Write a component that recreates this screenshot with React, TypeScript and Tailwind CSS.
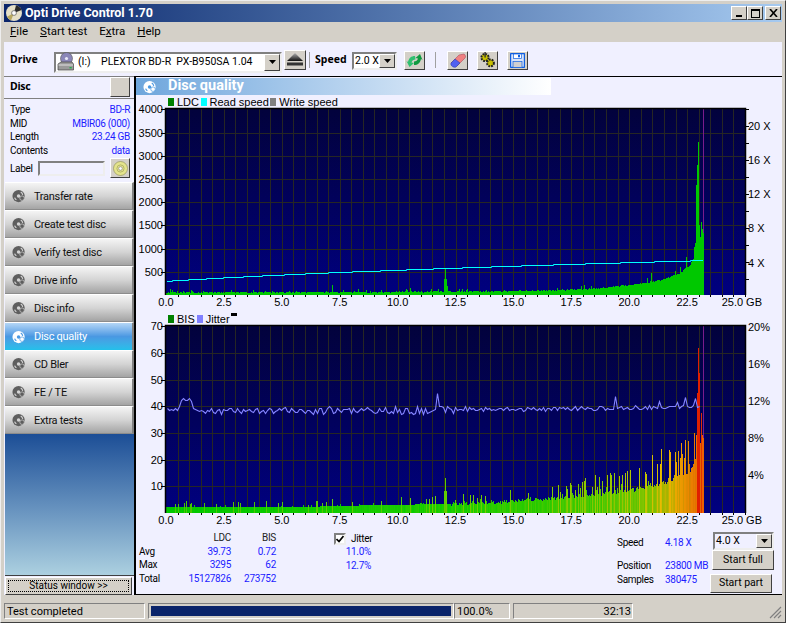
import React from 'react';

// small seeded generator, the curves have to come out the same on every load
const makeRand = (seed: number) => () => {
  seed = (seed * 1664525 + 1013904223) >>> 0;
  return seed / 4294967296;
};

const lerpPoints = (pts: number[][], x: number) => {
  for (let i = 1; i < pts.length; i++) {
    if (x <= pts[i][0]) {
      const [x0, y0] = pts[i - 1];
      const [x1, y1] = pts[i];
      return y0 + ((y1 - y0) * (x - x0)) / (x1 - x0);
    }
  }
  return pts[pts.length - 1][1];
};

const PLOT_LEFT = 166;
const PLOT_RIGHT = 745;
const DATA_END = 703;

const ldcBars = () => {
  const rand = makeRand(11);
  const env = [[166, 2], [400, 2.2], [500, 3], [560, 4], [600, 6], [628, 9], [660, 14], [680, 21], [690, 30], [696, 42], [703, 58]];
  const spikes: Record<number, number> = {
    170: 6, 172: 5, 231: 5, 296: 4, 332: 10, 358: 6, 381: 5, 406: 6, 410: 7, 431: 6, 438: 6, 444: 16, 445: 27, 446: 16, 447: 9, 459: 6, 462: 6, 486: 5, 651: 22,
    686: 38, 680: 28, 675: 24, 694: 48, 695: 52, 696: 110, 697: 130, 698: 153, 699: 70, 700: 58, 701: 73, 702: 66, 703: 62,
  };
  const bars: { x: number; h: number }[] = [];
  for (let x = PLOT_LEFT; x <= DATA_END; x++) {
    let h = lerpPoints(env, x) + rand() * 1.4;
    if (rand() < 0.07) h += rand() * (x > 500 ? 5 : 3);
    if (spikes[x]) h = spikes[x];
    bars.push({ x, h: Math.round(h) });
  }
  return bars;
};

const bisColor = (x: number, bump: number, rand: () => number) => {
  const stops = [[166, 0, 200, 0], [450, 30, 205, 0], [600, 70, 200, 0], [650, 120, 195, 0], [672, 200, 175, 0], [692, 225, 125, 0], [703, 225, 95, 0]];
  let c = stops[stops.length - 1];
  for (let i = 1; i < stops.length; i++) {
    if (x <= stops[i][0]) {
      const a = stops[i - 1];
      const b = stops[i];
      const t = (x - a[0]) / (b[0] - a[0]);
      c = [x, a[1] + (b[1] - a[1]) * t, a[2] + (b[2] - a[2]) * t, 0];
      break;
    }
  }
  const shift = (rand() - 0.5) * (x > 400 ? 36 : 14) + bump;
  return `rgb(${Math.min(235, Math.max(0, Math.round(c[1] + shift)))},${Math.round(c[2])},0)`;
};

const bisBars = () => {
  const rand = makeRand(29);
  const env = [[166, 6], [300, 6], [380, 8], [450, 9], [500, 11], [560, 15], [600, 19], [640, 24], [670, 32], [690, 42], [703, 75]];
  const spikes: Record<number, number> = {
    445: 35, 446: 22, 444: 22, 332: 14, 266: 12, 238: 11, 186: 12, 184: 10, 585: 35, 595: 38, 607: 38, 611: 38, 652: 58, 661: 64, 681: 70, 678: 62, 688: 72, 696: 78, 697: 120, 698: 165, 699: 140, 700: 70, 701: 100, 702: 78, 703: 75,
  };
  const bars: { x: number; h: number; fill: string }[] = [];
  for (let x = PLOT_LEFT; x <= DATA_END; x++) {
    const e = lerpPoints(env, x);
    let h = e + (x > 450 ? rand() * 4 - 2 : 0);
    const chance = x > 560 ? 0.32 : x > 400 ? 0.2 : 0.1;
    if (rand() < chance) h += 1 + rand() * e * (x > 560 ? 1 : x > 400 ? 0.9 : 0.8);
    if (spikes[x]) h = spikes[x];
    const bump = h > e * 1.35 ? 70 : 0;
    const fill = x >= 697 && x <= 699 ? '#e02000' : x === 701 ? '#e03000' : bisColor(x, bump, rand);
    bars.push({ x, h: Math.round(h), fill });
  }
  return bars;
};

const jitterPoints = () => {
  const rand = makeRand(7);
  const base = [[166, 409], [178, 409], [182, 399], [190, 398], [193, 408], [200, 411], [300, 410], [400, 410], [600, 408], [703, 406]];
  const spikes: Record<number, number> = { 438: 393, 615: 396, 660: 401, 678: 402, 686: 397, 696: 398 };
  const pts: string[] = [];
  for (let x = PLOT_LEFT + 1; x <= DATA_END - 3; x += 2) {
    const amp = x < 200 ? 1.4 : x < 300 ? 3 : x < 470 ? 4 : 2;
    let y = lerpPoints(base, x) + (rand() - 0.5) * amp * 2;
    if (spikes[x] || spikes[x + 1]) y = spikes[x] || spikes[x + 1];
    pts.push(`${x + 0.5},${Math.round(y) + 0.5}`);
  }
  return pts.join(' ');
};

const speedSteps = [172, 188, 206, 223, 243, 262, 284, 305, 328, 352, 380, 406, 433, 462, 491, 521, 553, 585, 620, 654, 690];

const speedLine = () => {
  const pts = ['167,281.5'];
  speedSteps.forEach((x, i) => {
    pts.push(`${x + 0.5},${281.5 - i}`, `${x + 0.5},${280.5 - i}`);
  });
  pts.push(`${DATA_END},260.5`);
  return pts.join(' ');
};

const ldc = ldcBars();
const bis = bisBars();
const jitter = jitterPoints();
const speed = speedLine();

const gridXs = Array.from({ length: 50 }, (_, i) => Math.round(PLOT_LEFT + ((i + 1) * (PLOT_RIGHT - PLOT_LEFT)) / 50) + 0.5);
const xLabels = ['0.0', '2.5', '5.0', '7.5', '10.0', '12.5', '15.0', '17.5', '20.0', '22.5'];

const XAxis: React.FC<{ y: number }> = ({ y }) => (
  <g>
    {gridXs.map((x) => (
      <line key={x} x1={x} x2={x} y1={y} y2={y + 2} stroke="#000" />
    ))}
    {xLabels.map((t, i) => (
      <text key={t} x={PLOT_LEFT + (i * (PLOT_RIGHT - PLOT_LEFT)) / 10} y={y + 11} textAnchor="middle">
        {t}
      </text>
    ))}
    <text x={762} y={y + 11} textAnchor="end">
      25.0 GB
    </text>
  </g>
);

const PlotFrame: React.FC<{ top: number; bottom: number; gridYs: number[]; id: string }> = ({ top, bottom, gridYs, id }) => (
  <g>
    <defs>
      <linearGradient id={id} x1="0" y1="0" x2="0" y2="1">
        <stop offset="0" stopColor="#02023c" />
        <stop offset="0.5" stopColor="#01015c" />
        <stop offset="1" stopColor="#000080" />
      </linearGradient>
    </defs>
    <rect x={PLOT_LEFT} y={top} width={PLOT_RIGHT - PLOT_LEFT} height={bottom - top} fill={`url(#${id})`} />
    {gridXs.slice(0, -1).map((x) => (
      <line key={x} x1={x} x2={x} y1={top} y2={bottom} stroke="#262624" />
    ))}
    {gridYs.map((y) => (
      <line key={y} x1={PLOT_LEFT} x2={PLOT_RIGHT} y1={y} y2={y} stroke="#262624" />
    ))}
    <line x1={DATA_END + 0.5} x2={DATA_END + 0.5} y1={top} y2={bottom} stroke="#7a1c8c" />
  </g>
);

const TopChart = () => {
  const left = [4000, 3500, 3000, 2500, 2000, 1500, 1000, 500];
  const rightLabels = ['20 X', '16 X', '12 X', '8 X', '4 X'];
  const ys = left.map((v) => Math.round(295 - v * 0.0464) + 0.5);
  return (
    <svg viewBox="136 108 646 205" className="w-[646px] h-[205px] block overflow-visible text-[11px] font-['Liberation_Sans',Arial,sans-serif] shrink-0">
      <PlotFrame id="plotTop" top={109} bottom={295} gridYs={ys.slice(1)} />
      {ldc.map((b) => (
        <rect key={b.x} x={b.x} y={295 - b.h} width={1} height={b.h} fill="#00c800" />
      ))}
      <polyline points={speed} fill="none" stroke="#00ffff" strokeWidth={1} />
      <polyline points="165.5,295 165.5,108.5 745.5,108.5 745.5,295" fill="none" stroke="#000" strokeWidth={1.5} />
      {left.map((v, i) => (
        <g key={v}>
          <line x1={161} x2={166} y1={ys[i]} y2={ys[i]} stroke="#000" />
          <text x={163} y={ys[i] + 3.5} textAnchor="end">
            {v}
          </text>
        </g>
      ))}
      {Array.from({ length: 11 }, (_, i) => 279.5 - i * 17).map((y) => (
        <line key={y} x1={745} x2={749} y1={y} y2={y} stroke="#000" />
      ))}
      {rightLabels.map((t, i) => (
        <text key={t} x={748} y={129.5 + i * 34.3}>
          {t}
        </text>
      ))}
      <XAxis y={295} />
    </svg>
  );
};

const BottomChart = () => {
  const left = [70, 60, 50, 40, 30, 20, 10];
  const right = ['20%', '16%', '12%', '8%', '4%'];
  const ys = left.map((v) => Math.round(513 - v * 2.67) + 0.5);
  return (
    <svg viewBox="136 324 646 207" className="w-[646px] h-[207px] block overflow-visible text-[11px] font-['Liberation_Sans',Arial,sans-serif] shrink-0">
      <PlotFrame id="plotBottom" top={326} bottom={513} gridYs={ys.slice(1)} />
      {bis.map((b) => (
        <rect key={b.x} x={b.x} y={513 - b.h} width={1} height={b.h} fill={b.fill} />
      ))}
      <polyline points={jitter} fill="none" stroke="#8484ff" strokeWidth={1.1} />
      <polyline points="165.5,513 165.5,325.5 745.5,325.5 745.5,513" fill="none" stroke="#000" strokeWidth={1.5} />
      {left.map((v, i) => (
        <g key={v}>
          <line x1={161} x2={166} y1={ys[i]} y2={ys[i]} stroke="#000" />
          <text x={163} y={ys[i] + 3.5} textAnchor="end">
            {v}
          </text>
        </g>
      ))}
      {right.map((t, i) => (
        <text key={t} x={748} y={330.5 + i * 37}>
          {t}
        </text>
      ))}
      <XAxis y={513} />
    </svg>
  );
};

/* icons */
const AppIcon = () => (
  <svg width="18" height="18" viewBox="0 0 18 18">
    <circle cx="9" cy="9" r="8" fill="#e6e0c8" />
    <path d="M9 9 L11 1.3 A8 8 0 0 1 16.6 6 Z" fill="#2a2a2a" />
    <path d="M9 9 L2 12.8 A8 8 0 0 0 6 16.4 Z" fill="#b8a860" />
    <circle cx="9" cy="9" r="2.4" fill="#fff" stroke="#555" strokeWidth="0.7" />
  </svg>
);

const DriveIcon = () => (
  <svg width="17" height="20" viewBox="0 0 17 20">
    <ellipse cx="9.5" cy="6.5" rx="6" ry="6" fill="#8a86b8" stroke="#555" strokeWidth="0.6" />
    <circle cx="9.5" cy="6.5" r="1.6" fill="#e8e8f8" />
    <path d="M1 12 L4 10 H15 L16.5 12 V18 H1 Z" fill="#9a9a9a" stroke="#444" strokeWidth="0.7" />
    <path d="M1.5 13 H16" stroke="#e0e0e0" />
    <rect x="12.5" y="15" width="2.2" height="1.4" fill="#22b14c" />
  </svg>
);

const DiscNavIcon: React.FC<{ active?: boolean }> = ({ active }) => {
  const body = active ? '#ffffff' : '#5e5e5e';
  const cut = active ? '#4a98e2' : '#d4d4d4';
  return (
    <svg width="14" height="14" viewBox="0 0 16 16">
      <circle cx="7.5" cy="8" r="7" fill={body} />
      <circle cx="7.5" cy="8" r="2" fill={cut} />
      <path d="M10 3.5 A5 5 0 0 1 12.3 6.6" stroke={cut} strokeWidth="1.3" fill="none" />
      <path d="M5 12.4 A5 5 0 0 1 3 9.8" stroke={cut} strokeWidth="1.3" fill="none" />
      <circle cx="11.5" cy="10.5" r="2.6" fill={body} stroke={cut} strokeWidth="0.8" />
    </svg>
  );
};

const DropArrow = () => (
  <span className="w-[16px] h-full shrink-0 flex items-center justify-center bg-[#d4d0c8] border border-t-white border-l-white border-r-[#404040] border-b-[#404040]">
    <svg width="7" height="4" viewBox="0 0 7 4">
      <path d="M0 0 H7 L3.5 4 Z" fill="#000" />
    </svg>
  </span>
);

const ToolButton: React.FC<{ children: React.ReactNode; className?: string }> = ({ children, className }) => (
  <button className={`w-[21px] h-[19px] flex items-center justify-center bg-[#d4d0c8] border border-t-white border-l-white border-r-[#404040] border-b-[#404040] ${className ?? ''}`}>
    {children}
  </button>
);

const CaptionButton: React.FC<{ children: React.ReactNode }> = ({ children }) => (
  <span className="w-[16px] h-[14px] flex items-center justify-center bg-[#d4d0c8] border border-t-white border-l-white border-r-[#404040] border-b-[#404040]">
    {children}
  </span>
);

const MenuItem: React.FC<{ before?: string; key_: string; after: string }> = ({ before, key_, after }) => (
  <span>
    {before}
    <span className="underline">{key_}</span>
    {after}
  </span>
);

const navItems = ['Transfer rate', 'Create test disc', 'Verify test disc', 'Drive info', 'Disc info', 'Disc quality', 'CD Bler', 'FE / TE', 'Extra tests'];

const infoRows = [
  ['Type', 'BD-R'],
  ['MID', 'MBIR06 (000)'],
  ['Length', '23.24 GB'],
  ['Contents', 'data'],
];

const LegendSwatch: React.FC<{ className: string; label: string }> = ({ className, label }) => (
  <span className="flex items-center gap-[3px]">
    <span className={`w-[6px] h-[8px] ${className}`} />
    {label}
  </span>
);

const App: React.FC = () => {
  return (
    <div className="w-[786px] h-[623px] flex flex-col pt-[3px] px-[3px] pb-[2px] bg-[#d4d0c8] border-r border-b border-[#404040] border-t-[#eeeeee] border-l-[#eeeeee] border-t border-l overflow-hidden text-black font-['Roboto',Tahoma,sans-serif]">
      {/* Title bar */}
      <div className="h-[18px] shrink-0 flex items-center justify-between pl-[1px] pr-[1px] bg-gradient-to-r from-[#0a246a] to-[#a6caf0]">
        <div className="flex items-center gap-[2px]">
          <AppIcon />
          <span className="text-white font-bold text-[12.5px] leading-none">Opti Drive Control 1.70</span>
        </div>
        <div className="flex items-center">
          <CaptionButton>
            <span className="w-[6px] h-[2px] bg-black mt-[6px]" />
          </CaptionButton>
          <CaptionButton>
            <span className="w-[9px] h-[9px] border border-black border-t-2" />
          </CaptionButton>
          <span className="w-[2px]" />
          <CaptionButton>
            <svg width="9" height="8" viewBox="0 0 9 8">
              <path d="M1 0 L8 8 M8 0 L1 8" stroke="#000" strokeWidth="1.6" />
            </svg>
          </CaptionButton>
        </div>
      </div>

      {/* Menu */}
      <div className="h-[20px] shrink-0 flex items-center gap-[12px] pl-[6px] text-[11.5px]">
        <MenuItem key_="F" after="ile" />
        <MenuItem key_="S" after="tart test" />
        <MenuItem before="E" key_="x" after="tra" />
        <MenuItem key_="H" after="elp" />
      </div>

      <div className="flex-1 min-h-0 flex flex-col bg-[#f0f0ff]">
        {/* Toolbar */}
        <div className="h-[34px] shrink-0 flex items-center pl-[6px] pt-[2px] text-[11px]">
          <span className="font-bold w-[44px] font-['Noto_Sans',sans-serif] text-[10.5px]">Drive</span>
          <div className="w-[228px] h-[21px] flex items-center bg-white border-2 border-t-[#808080] border-l-[#808080] border-r-[#eeeeee] border-b-[#eeeeee] pl-[1px] mt-[4px] text-[10.5px]">
            <DriveIcon />
            <span className="ml-[4px] whitespace-pre flex-1">(I:)    PLEXTOR BD-R  PX-B950SA 1.04</span>
            <DropArrow />
          </div>
          <ToolButton className="ml-[2px] w-[22px] h-[20px] -mt-[1px]">
            <svg width="16" height="13" viewBox="0 0 16 13">
              <defs>
                <linearGradient id="ej" x1="0" y1="0" x2="0" y2="1">
                  <stop offset="0" stopColor="#b0b0b0" />
                  <stop offset="1" stopColor="#101010" />
                </linearGradient>
              </defs>
              <path d="M8 0 L16 8 H0 Z" fill="url(#ej)" />
              <rect x="0" y="9.5" width="16" height="3" fill="#333" />
            </svg>
          </ToolButton>
          <span className="w-px h-[16px] bg-[#a0a0a0] ml-[3px] mr-[5px]" />
          <span className="font-bold w-[37px] font-['Noto_Sans',sans-serif] text-[10.5px]">Speed</span>
          <div className="w-[45px] h-[18px] flex items-center bg-white border-2 border-t-[#808080] border-l-[#808080] border-r-[#eeeeee] border-b-[#eeeeee] pl-[1px] text-[10.5px] mt-[1px]">
            <span className="flex-1 whitespace-pre">2.0 X</span>
            <DropArrow />
          </div>
          <ToolButton className="ml-[7px]">
            <svg width="17" height="15" viewBox="0 0 17 15">
              <path d="M9 3 C5 3 3 5 2 9 L0.5 8 L3.5 14 L8 10 L5.5 9.5 C6 7.5 7.5 6.5 9.5 6.5 Z" fill="#30c070" />
              <path d="M8 12 C12 12 14 10 15 6 L16.5 7 L14 1 L9.5 5 L12 5.5 C11.5 7.5 10 8.5 8 8.5 Z" fill="#109a40" />
            </svg>
          </ToolButton>
          <span className="w-px h-[16px] bg-[#a0a0a0] ml-[10px] mr-[11px]" />
          <ToolButton>
            <svg width="16" height="15" viewBox="0 0 16 15">
              <path d="M1 10 L9 2 L14 1 C15.5 2 16 4 15 5 L7 13 Z" fill="#f08080" stroke="#a04050" strokeWidth="0.5" />
              <path d="M1 10 L5 6 L10 10 L6 14 C4 15 0 13 1 10 Z" fill="#5060f0" stroke="#2030a0" strokeWidth="0.5" />
            </svg>
          </ToolButton>
          <ToolButton className="ml-[9px]">
            <svg width="17" height="16" viewBox="0 0 17 16">
              <circle cx="6" cy="5.5" r="3.6" fill="#c8c000" stroke="#222" strokeWidth="2" strokeDasharray="1.8 1" />
              <circle cx="11.5" cy="11" r="3.4" fill="#c8c000" stroke="#222" strokeWidth="2" strokeDasharray="1.8 1" />
              <rect x="5.4" y="0" width="1.4" height="5.5" fill="#333" />
            </svg>
          </ToolButton>
          <ToolButton className="ml-[9px]">
            <svg width="15" height="15" viewBox="0 0 15 15">
              <rect x="0.5" y="0.5" width="14" height="14" rx="1" fill="#d8e4f8" stroke="#1060e0" strokeWidth="1.4" />
              <rect x="3.5" y="1" width="8" height="4.5" fill="#fff" stroke="#1060e0" strokeWidth="0.7" />
              <rect x="8" y="1.8" width="2" height="2.5" fill="#1060e0" />
              <rect x="3" y="8.5" width="9" height="6" fill="#d0d0d0" stroke="#1060e0" strokeWidth="0.7" />
            </svg>
          </ToolButton>
        </div>

        <div className="flex-1 min-h-0 flex">
          {/* Left column */}
          <aside className="w-[130px] shrink-0 flex flex-col text-[10px] tracking-[-0.3px]">
            <div className="h-[23px] shrink-0 flex items-center justify-between pl-[6px] pr-[4px] border-y border-[#808080] pb-[1px]">
              <span className="font-bold text-[10.5px] font-['Noto_Sans',sans-serif]">Disc</span>
              <span className="w-[20px] h-[20px] bg-[#d4d0c8] border border-t-white border-l-white border-r-[#404040] border-b-[#404040]" />
            </div>
            <div className="flex flex-col pl-[6px] pr-[4px] pt-[4px]">
              {infoRows.map(([k, v]) => (
                <div key={k} className="h-[13.8px] flex items-center justify-between leading-none">
                  <span>{k}</span>
                  <span className="text-[#1c1cff]">{v}</span>
                </div>
              ))}
            </div>
            <div className="h-[20px] shrink-0 flex items-center pl-[6px] pr-[4px] mb-[4px]">
              <span className="w-[28px]">Label</span>
              <span className="w-[67px] h-[15px] bg-[#f0f0ff] border-2 border-t-[#808080] border-l-[#808080] border-r-[#eeeeee] border-b-[#eeeeee]" />
              <span className="ml-auto w-[20px] h-[20px] bg-[#d4d0c8] border border-t-white border-l-white border-r-[#404040] border-b-[#404040] flex items-center justify-center">
                <svg width="15" height="15" viewBox="0 0 15 15">
                  <circle cx="7.5" cy="7.5" r="7" fill="#e4e48c" stroke="#8a8a50" strokeWidth="0.6" />
                  <circle cx="7.5" cy="7.5" r="3.6" fill="none" stroke="#a8a860" strokeWidth="0.8" />
                  <circle cx="7.5" cy="7.5" r="1.8" fill="#fff" stroke="#777" strokeWidth="0.6" />
                </svg>
              </span>
            </div>
            <nav className="flex flex-col pl-[1px] text-[11px]">
              {navItems.map((item) => {
                const active = item === 'Disc quality';
                return (
                  <div
                    key={item}
                    className={
                      active
                        ? 'h-[28px] flex items-center gap-[8px] pl-[7px] text-white bg-gradient-to-b from-[#b4d6f6] via-[#4a98e2] to-[#22c0ea] border-t border-white border-r-2 border-r-[#808080]'
                        : 'h-[28px] flex items-center gap-[8px] pl-[7px] text-[#111] bg-gradient-to-b from-[#f4f4f4] via-[#d4d4d4] to-[#a4a4a4] border-t border-white border-b border-b-[#8c8c8c] border-r-2 border-r-[#808080]'
                    }
                  >
                    <DiscNavIcon active={active} />
                    <span className="leading-none">{item}</span>
                  </div>
                );
              })}
            </nav>
            <div className="flex-1 ml-[1px] bg-gradient-to-b from-[#1c4e96] to-[#acd0e0] border-b border-[#404040]" />
            <div className="h-[18px] shrink-0 ml-[1px] mr-[2px] mt-[1px] p-[2px] bg-[#d4d0c8] border border-t-white border-l-white border-r-[#404040] border-b-[#404040] flex">
              <span className="flex-1 border border-dotted border-black flex items-center justify-center text-[10px] leading-none tracking-normal">Status window &gt;&gt;</span>
            </div>
          </aside>

          {/* Main panel */}
          <main className="flex-1 min-w-0 flex flex-col border-t border-l-2 border-b border-black">
            <div className="h-[17px] shrink-0 w-[415px] mt-px flex items-center pl-[7px] bg-gradient-to-r from-[#6ea6dc] to-white">
              <DiscNavIcon active />
              <span className="ml-[11px] text-white font-bold text-[14.5px] leading-none">Disc quality</span>
            </div>
            <div className="h-[13px] shrink-0 flex items-center gap-[1.5px] pl-[32px] pt-[1px] text-[11px] leading-none font-['Liberation_Sans',Arial,sans-serif]">
              <LegendSwatch className="bg-[#008000]" label="LDC" />
              <LegendSwatch className="bg-[#00ffff]" label="Read speed" />
              <LegendSwatch className="bg-[#808080]" label="Write speed" />
            </div>
            <TopChart />
            <div className="relative h-[11px] shrink-0 flex items-center gap-[2px] pl-[32px] pt-[1px] text-[11px] leading-none font-['Liberation_Sans',Arial,sans-serif]">
              <LegendSwatch className="bg-[#008000]" label="BIS" />
              <LegendSwatch className="bg-[#8080ff]" label="Jitter" />
              <span className="absolute left-[95px] top-0 w-[6px] h-[3px] bg-black" />
            </div>
            <BottomChart />

            {/* Stats */}
            <div className="flex-1 min-h-0 flex items-start pl-[3px] text-[10px] tracking-[-0.3px] leading-none">
              <div className="grid grid-cols-[40px_52px_45px] auto-rows-[13.8px] items-center">
                <span />
                <span className="text-right text-[#222]">LDC</span>
                <span className="text-right text-[#222]">BIS</span>
                <span>Avg</span>
                <span className="text-right text-[#1c1cff]">39.73</span>
                <span className="text-right text-[#1c1cff]">0.72</span>
                <span>Max</span>
                <span className="text-right text-[#1c1cff]">3295</span>
                <span className="text-right text-[#1c1cff]">62</span>
                <span>Total</span>
                <span className="text-right text-[#1c1cff]">15127826</span>
                <span className="text-right text-[#1c1cff]">273752</span>
              </div>
              <div className="ml-[58px] w-[37px] flex flex-col items-stretch">
                <div className="h-[12px] flex items-center gap-[5px] mt-[2px]">
                  <span className="w-[12px] h-[12px] shrink-0 flex items-center justify-center bg-white border-2 border-t-[#808080] border-l-[#808080] border-r-[#eeeeee] border-b-[#eeeeee]">
                    <svg width="8" height="8" viewBox="0 0 8 8">
                      <path d="M0.5 4 L3 6.5 L7.5 1" fill="none" stroke="#000" strokeWidth="1.7" />
                    </svg>
                  </span>
                  <span>Jitter</span>
                </div>
                <span className="h-[13.8px] flex items-center justify-end text-[#1c1cff] whitespace-nowrap">11.0%</span>
                <span className="h-[13.8px] flex items-center justify-end text-[#1c1cff] whitespace-nowrap">12.7%</span>
              </div>
              <div className="ml-[246px] w-[93px] flex flex-col pt-[5px]">
                <div className="h-[14px] flex items-center">
                  <span className="w-[48px]">Speed</span>
                  <span className="text-[#1c1cff] whitespace-nowrap">4.18 X</span>
                </div>
                <div className="h-[14px] flex items-center mt-[9px]">
                  <span className="w-[48px]">Position</span>
                  <span className="text-[#1c1cff] whitespace-nowrap">23800 MB</span>
                </div>
                <div className="h-[14px] flex items-center">
                  <span className="w-[48px]">Samples</span>
                  <span className="text-[#1c1cff] whitespace-nowrap">380475</span>
                </div>
              </div>
              <div className="w-[64px] flex flex-col shrink-0 text-[10.5px] tracking-normal mt-px">
                <div className="ml-[3px] w-[61px] h-[18px] flex items-center bg-[#f0f0ff] border-2 border-t-[#808080] border-l-[#808080] border-r-[#eeeeee] border-b-[#eeeeee] pl-[1px]">
                  <span className="flex-1 whitespace-pre">4.0 X</span>
                  <DropArrow />
                </div>
                <button className="ml-[2px] w-[62px] h-[20px] bg-[#d4d0c8] border border-t-white border-l-white border-r-[#404040] border-b-[#404040]">Start full</button>
                <button className="mt-[4px] w-[62px] h-[19px] bg-[#d4d0c8] border border-t-white border-l-white border-r-[#404040] border-b-[#404040]">Start part</button>
              </div>
            </div>
          </main>
        </div>
      </div>

      {/* Status bar */}
      <div className="h-[25px] shrink-0 flex items-end text-[11px] leading-none">
        <span className="w-[141px] h-[16px] mb-px flex items-center pl-[2px] border border-t-[#808080] border-l-[#808080] border-r-white border-b-white">Test completed</span>
        <span className="ml-[3px] w-[306px] h-[16px] mb-px p-[2px] border border-t-[#808080] border-l-[#808080] border-r-white border-b-white flex">
          <span className="flex-1 bg-[#0a246a]" />
        </span>
        <span className="w-[56px] h-[16px] mb-px flex items-center pl-[2px] border border-t-[#808080] border-l-[#808080] border-r-white border-b-white">100.0%</span>
        <span className="ml-[3px] w-[120px] h-[16px] mb-px flex items-center justify-end pr-[1px] border border-t-[#808080] border-l-[#808080] border-r-white border-b-white">32:13</span>
        <span className="flex-1" />
        <svg width="13" height="13" viewBox="0 0 13 13" className="mb-[1px]">
          <path d="M12 1 L1 12 M12 5 L5 12 M12 9 L9 12" stroke="#808080" strokeWidth="1.2" />
        </svg>
      </div>
    </div>
  );
};

export default App;
